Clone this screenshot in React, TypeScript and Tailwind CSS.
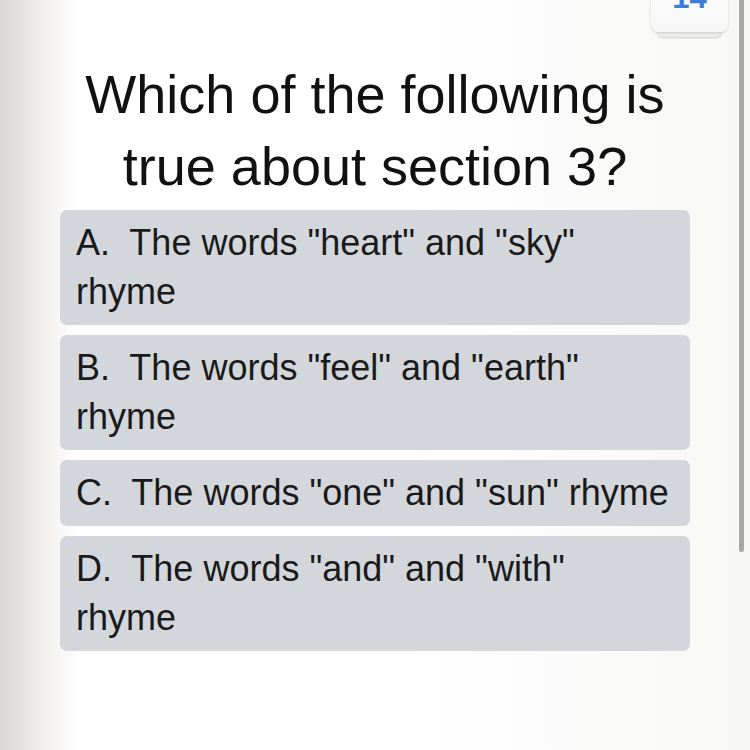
import React from 'react';

const options = [
  { letter: 'A.', lines: ['The words "heart" and "sky"', 'rhyme'] },
  { letter: 'B.', lines: ['The words "feel" and "earth"', 'rhyme'] },
  { letter: 'C.', lines: ['The words "one" and "sun" rhyme'] },
  { letter: 'D.', lines: ['The words "and" and "with"', 'rhyme'] },
];

const App: React.FC = () => {
  return (
    <div className="relative w-[750px] h-[750px] overflow-hidden bg-white font-['Liberation_Sans',Arial,sans-serif]">
      {/* left page shadow */}
      <div className="absolute inset-y-0 left-0 w-[80px] bg-gradient-to-r from-[#d9d7d4] via-[#efeeec] to-white" />
      <div className="absolute inset-y-0 left-[80px] right-0 bg-gradient-to-r from-white via-white to-[#f7f7f6]" />

      {/* page number badge */}
      <div className="absolute left-[657px] top-[20px] w-[65px] h-[17px] rounded-b-[6px] bg-[#eeeeee] shadow-[0_1px_2px_rgba(0,0,0,0.18)]" />
      <div className="absolute left-[651px] top-[-40px] w-[77px] h-[72px] rounded-b-[8px] bg-gradient-to-b from-white to-[#f7f7f7] shadow-[0_1px_3px_rgba(0,0,0,0.15)] flex items-end justify-center pb-[19px]">
        <span className="text-[31px] leading-none font-bold text-[#3d7ddb]">14</span>
      </div>

      {/* scrollbar */}
      <div className="absolute right-[6px] top-0 w-[5px] h-[552px] rounded-b-full bg-[#a7a7a7]" />

      <div className="relative flex flex-col px-[60px] pt-[58px]">
        <h1 className="text-center text-[54px] leading-[72px] text-[#111111] font-normal">
          Which of the following is
          <br />
          true about section 3?
        </h1>
        <div className="mt-[8px] flex flex-col gap-[10px]">
          {options.map((o) => (
            <div
              key={o.letter}
              className="rounded-[7px] bg-[#d3d6db] px-[16px] pt-[8px] pb-[9px] text-[36px] leading-[49px] text-[#1a1a1a]"
            >
              {o.lines.map((line, i) => (
                <div key={i} className="whitespace-pre">
                  {i === 0 ? o.letter + '  ' + line : line}
                </div>
              ))}
            </div>
          ))}
        </div>
      </div>
    </div>
  );
};

export default App;
